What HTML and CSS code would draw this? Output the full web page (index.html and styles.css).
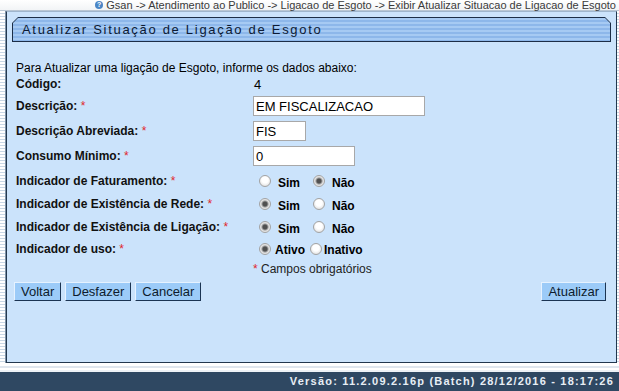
FILE: index.html
```html
<!DOCTYPE html>
<html lang="pt-BR">
<head>
    <meta charset="UTF-8">
    <title>Atualizar Situação de Ligação de Esgoto</title>
    <link rel="stylesheet" href="styles.css">
</head>
<body>
    <div class="crumbs">
        <span class="help">?</span>
        Gsan -&gt; Atendimento ao Publico -&gt; Ligacao de Esgoto -&gt; Exibir Atualizar Situacao de Ligacao de Esgoto
    </div>

    <div class="frame">
        <div class="rail"></div>

        <div class="panel">
            <div class="title">
                <div class="title-in">Atualizar Situação de Ligação de Esgoto</div>
            </div>

            <div class="form">
                <div class="intro">Para Atualizar uma ligação de Esgoto, informe os dados abaixo:</div>

                <div class="lbl">Código:</div>
                <div class="val">4</div>

                <div class="lbl">Descrição: <span class="req">*</span></div>
                <div><input class="txt w-desc" type="text" value="EM FISCALIZACAO"></div>

                <div class="lbl">Descrição Abreviada: <span class="req">*</span></div>
                <div><input class="txt w-abr" type="text" value="FIS"></div>

                <div class="lbl">Consumo Mínimo: <span class="req">*</span></div>
                <div><input class="txt w-cons" type="text" value="0"></div>

                <div class="lbl">Indicador de Faturamento: <span class="req">*</span></div>
                <div class="opts">
                    <input type="radio" name="fat"><span>Sim</span>
                    <input type="radio" name="fat" checked><span>Não</span>
                </div>

                <div class="lbl">Indicador de Existência de Rede: <span class="req">*</span></div>
                <div class="opts">
                    <input type="radio" name="rede" checked><span>Sim</span>
                    <input type="radio" name="rede"><span>Não</span>
                </div>

                <div class="lbl">Indicador de Existência de Ligação: <span class="req">*</span></div>
                <div class="opts">
                    <input type="radio" name="lig" checked><span>Sim</span>
                    <input type="radio" name="lig"><span>Não</span>
                </div>

                <div class="lbl">Indicador de uso: <span class="req">*</span></div>
                <div class="opts tight">
                    <input type="radio" name="uso" checked><span>Ativo</span>
                    <input type="radio" name="uso"><span>Inativo</span>
                </div>

                <div></div>
                <div class="note"><span class="req">*</span> Campos obrigatórios</div>
            </div>

            <div class="actions">
                <div class="group">
                    <button>Voltar</button>
                    <button>Desfazer</button>
                    <button>Cancelar</button>
                </div>
                <button>Atualizar</button>
            </div>
        </div>

        <div class="rail right"></div>
    </div>

    <div class="gap"></div>

    <footer>Versão: 11.2.09.2.16p (Batch) 28/12/2016 - 18:17:26</footer>
</body>
</html>
```

FILE: styles.css
```css
* {
    margin: 0;
    padding: 0;
    box-sizing: border-box;
}

body {
    width: 619px;
    height: 391px;
    overflow: hidden;
    font-family: "Liberation Sans", Arial, sans-serif;
    color: #000;
    background: #fff;
}

/* breadcrumb */
.crumbs {
    height: 11px;
    line-height: 10px;
    font-size: 11px;
    color: #3a3a3a;
    text-align: right;
    padding-right: 3px;
    white-space: nowrap;
    background: linear-gradient(#fff, #f2f4f6);
    border-bottom: 1px solid #b9c6d3;
}

.help {
    display: inline-block;
    width: 8px;
    height: 8px;
    margin-top: 1px;
    border-radius: 50%;
    background: #4b86c6;
    color: #fff;
    font-size: 7px;
    font-weight: bold;
    line-height: 8px;
    text-align: center;
    vertical-align: top;
}

/* main frame */
.frame {
    display: flex;
    height: 352px;
}

.rail {
    width: 6px;
    background: repeating-linear-gradient(#fff 0 2px, #c9d7e5 2px 3px);
    border-right: 1px solid #7d91a6;
}

.rail.right {
    width: 2px;
    border-right: none;
}

.panel {
    flex: 1;
    background: #cbe3fb;
    border: 1px solid #22374e;
    border-top-color: #9fb6cd;
    display: flex;
    flex-direction: column;
}

.title {
    margin: 5px 5px 0 5px;
    height: 25px;
    padding: 1px;
    background: #1c2e47;
    clip-path: polygon(6px 0, calc(100% - 6px) 0, 100% 6px, 100% 100%, 0 100%, 0 6px);
}

.title-in {
    height: 100%;
    padding-left: 9px;
    line-height: 23px;
    font-size: 13px;
    letter-spacing: 1.7px;
    color: #0c1a33;
    background: repeating-linear-gradient(#a6caf3 0 2px, #8db7ea 2px 4px);
    clip-path: polygon(5px 0, calc(100% - 5px) 0, 100% 5px, 100% 100%, 0 100%, 0 5px);
}

/* form */
.form {
    display: grid;
    grid-template-columns: 237px 1fr;
    grid-template-rows: 16px 16px 28px 22px 28px 22px 24px 22px 22px 18px;
    align-items: center;
    margin-top: 18px;
    padding-left: 9px;
    font-size: 12px;
}

.intro {
    grid-column: 1 / 3;
}

.lbl {
    font-weight: bold;
    color: #111;
}

.req {
    color: #e0262b;
    font-weight: normal;
}

.val {
    font-size: 13px;
    padding-left: 1px;
}

.txt {
    height: 20px;
    border: 1px solid #a8a8a8;
    background: #fff;
    padding: 0 2px;
    font-family: inherit;
    font-size: 13px;
    color: #000;
    outline: none;
}

.w-desc { width: 172px; }
.w-abr { width: 53px; }
.w-cons { width: 102px; }

.opts {
    display: flex;
    align-items: center;
    font-weight: bold;
}

.opts span {
    padding-top: 3px;
    width: 29px;
}

.opts input {
    margin: 0 7px 0 6px;
}

.opts.tight span {
    width: auto;
    padding-top: 2px;
}

.opts.tight input {
    margin: 0 4px 0 6px;
}

.opts.tight input + span + input {
    margin-left: 5px;
    margin-right: 2px;
}

input[type="radio"] {
    appearance: none;
    width: 12px;
    height: 12px;
    border-radius: 50%;
    border: 1px solid #a3a3a3;
    background: radial-gradient(circle at 50% 40%, #fff 0 3px, #e4e4e4 6px);
    flex: none;
}

input[type="radio"]:checked {
    background: radial-gradient(circle, #505050 0 2px, #9a9a9a 3px, #dedede 4px, #f4f4f4 6px);
}

.note {
    font-size: 12px;
    color: #222;
}

/* buttons */
.actions {
    display: flex;
    justify-content: space-between;
    margin-top: 4px;
    padding: 0 10px 0 7px;
}

.group {
    display: flex;
    gap: 4px;
}

button {
    height: 19px;
    padding: 0 6px;
    font-family: inherit;
    font-size: 13px;
    color: #0d1b2c;
    background: #9ccbf8;
    border: 1px solid;
    border-color: #e6f2ff #1b3452 #1b3452 #e6f2ff;
    cursor: pointer;
}

/* bottom */
.gap {
    height: 9px;
    background: linear-gradient(#fff 0 3px, #dfe6ee 3px 5px, #fff 5px 7px, #eef2f6 7px);
}

footer {
    height: 19px;
    background: #2f4862;
    color: #e8eef5;
    font-size: 11px;
    font-weight: bold;
    letter-spacing: 1.2px;
    line-height: 19px;
    text-align: right;
    padding-right: 5px;
}
```
